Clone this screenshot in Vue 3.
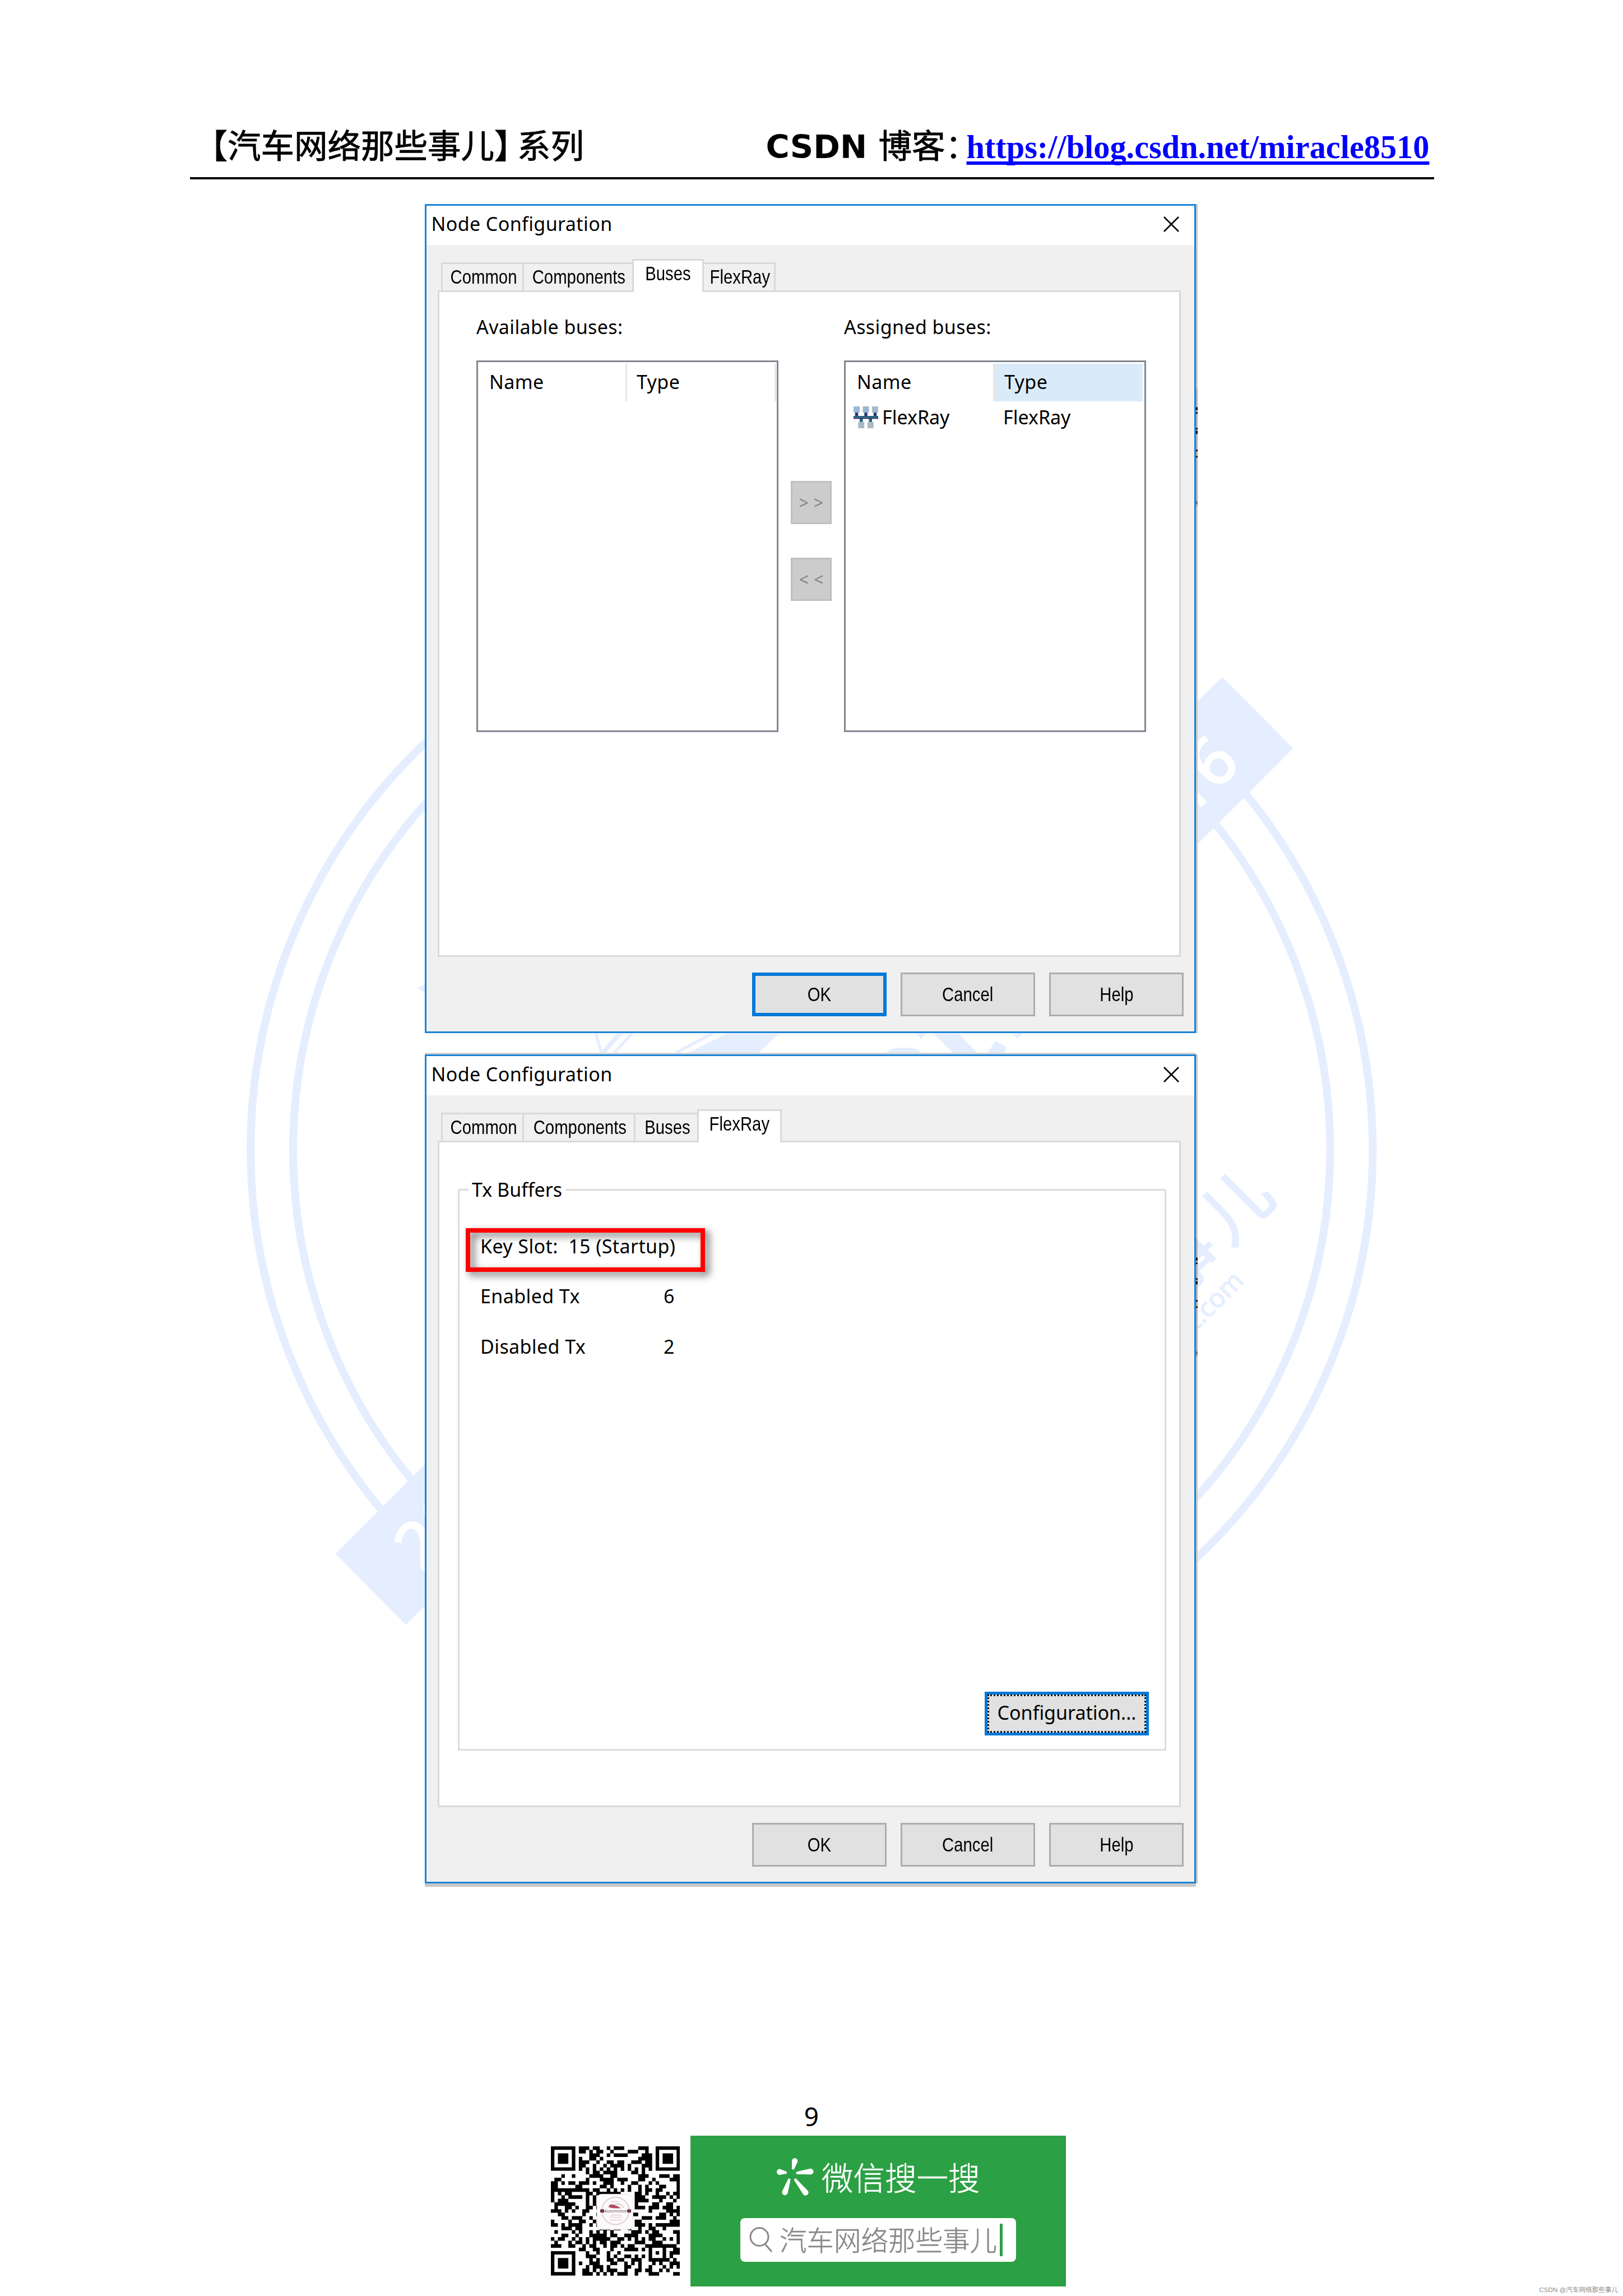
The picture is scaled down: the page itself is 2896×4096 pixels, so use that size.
<template>
  <div class="page">
    <svg class="watermark" viewBox="0 0 4961 7016">
      <g class="rings">
        <circle cx="2481" cy="3513" r="1715" />
        <circle cx="2481" cy="3513" r="1585" />
      </g>
      <g class="tint">
        <polygon points="3736,2068 3953,2287 3500,2740 3283,2521" />
        <polygon points="1025,4748 1241,4966 1694,4513 1478,4295" />
        <polygon points="1276,3020 1330,2990 1330,3050" />
        <polygon points="1885,3158 1905,3158 1852,3217 1833,3217" />
        <polygon points="2222,3158 2382,3158 2318,3217 2104,3217" />
        <polygon points="2800,3158 2830,3158 2815,3175" />
        <polygon points="2853,3158 2930,3158 2987,3217 2913,3217" />
        <polygon points="3096,3158 3126,3158 3111,3174" />
        <polygon points="3043,3181 3076,3200 3069,3217 3018,3217" />
        <path d="M2708 3217Q2724 3202 2742 3202H2785Q2803 3202 2818 3217z" />
        <text class="slogan" text-anchor="end" transform="translate(3922 3647) rotate(-45)">汽车网络那些事儿</text>
        <text class="site" text-anchor="end" transform="translate(3806 3918) rotate(-45)">www.autonet.com</text>
      </g>
      <path class="hair" d="M1821 3158L1838 3217M1933 3158L1877 3217M2178 3158L2066 3217" />
      <text class="year" text-anchor="end" transform="translate(3796 2338) rotate(-45)">2016</text>
      <text class="year" transform="translate(1292 4808) rotate(-45)">20</text>
    </svg>

    <header class="header">
      <div class="series"><span>【汽车网络那些事儿</span><span class="close-bracket">】</span><span>系列</span></div>
      <div class="blog">
        <b>CSDN</b><span class="blog-label">博客</span><span class="colon">：</span>
        <a class="link">https://blog.csdn.net/miracle8510</a>
      </div>
    </header>

    <main class="dialogs">
      <section v-for="d in dialogs" :key="d.active" class="dialog" :class="{ lower: d.active === 'FlexRay' }">
        <div class="titlebar">
          <span class="title">Node Configuration</span>
          <svg class="close" viewBox="0 0 28 28"><path d="M1 1L27 27M27 1L1 27" /></svg>
        </div>

        <div class="tabs">
          <div
            v-for="t in d.tabs"
            :key="t.name"
            class="tab"
            :class="{ active: t.name === d.active }"
            :style="{ width: t.width + 'px' }"
          >
            <span class="narrow">{{ t.name }}</span>
          </div>
        </div>

        <div v-if="d.active === 'Buses'" class="panel buses">
          <div>
            <div class="label">Available buses:</div>
            <div class="list">
              <div class="list-head">
                <span class="cell name">Name</span><span class="cell type">Type</span>
              </div>
            </div>
          </div>
          <div class="movers">
            <button class="mover">&gt;&gt;</button>
            <button class="mover">&lt;&lt;</button>
          </div>
          <div>
            <div class="label">Assigned buses:</div>
            <div class="list assigned">
              <div class="list-head">
                <span class="cell name">Name</span><span class="cell type hot">Type</span>
              </div>
              <div class="list-row">
                <div class="bus">
                  <svg class="bus-icon" viewBox="0 0 16 15" preserveAspectRatio="none">
                    <path fill="#97bbd8" d="M0 0h4v4.2H0z" />
                    <path fill="#9ab6ce" d="M6 0h4v4.2H6z" />
                    <path fill="#a9b9c8" d="M12 0h4v4.2h-4zM3 10.7h4V15H3z" />
                    <path fill="#b1b9c1" d="M9 10.7h4V15H9z" />
                    <path fill="#1b6577" d="M0 6.5h16v1H0zM4 8.5h2v2.2H4zM10 8.5h2v2.2h-2z" />
                    <path fill="#2a3a75" d="M0 7.5h16v1.1H0zM1 4.2h2v2.3H1zM7 4.2h2v2.3H7zM13 4.2h2v2.3h-2z" />
                  </svg>
                  <span>FlexRay</span>
                </div>
                <span>FlexRay</span>
              </div>
            </div>
          </div>
        </div>

        <div v-else class="panel">
          <fieldset class="group">
            <legend>Tx Buffers</legend>
            <div class="group-body">
              <div class="row marked">{{ keySlot }}</div>
              <div class="row"><span>Enabled Tx</span><span>6</span></div>
              <div class="row"><span>Disabled Tx</span><span>2</span></div>
              <button class="config"><span>Configuration...</span></button>
            </div>
          </fieldset>
        </div>

        <div class="actions">
          <button
            v-for="a in actions"
            :key="a"
            class="btn"
            :class="{ primary: a === 'OK' && d.active === 'Buses' }"
          >
            <span class="narrow">{{ a }}</span>
          </button>
        </div>

        <svg class="edge" viewBox="0 0 5 2534" preserveAspectRatio="none">
          <rect width="5" height="2534" fill="#c8c8c8" />
          <rect y="564" width="5" height="362" fill="#adb3b9" />
          <path fill="#0b0b18" d="M0 621h5v9H0zM0 636h5v5H0zM0 684h5v5H0zM0 693h5v10H0zM0 751h5v5H0zM0 770h5v5H0z" />
          <rect y="761" width="5" height="7" fill="#c0a878" />
          <rect y="908" width="5" height="10" fill="#777" />
        </svg>
      </section>
    </main>

    <footer class="footer">
      <div class="page-no">9</div>
      <div class="banner">
        <svg class="qr" viewBox="0 0 37 37">
          <path :d="qrPath" />
          <g v-for="f in finders" :key="f.join()" :transform="`translate(${f[0]} ${f[1]})`">
            <path fill-rule="evenodd" d="M0 0h7v7H0zM1 1v5h5V1zM2 2h3v3H2z" />
          </g>
          <rect x="13.2" y="13.7" width="10.3" height="10.1" rx="1.3" fill="#fdfafb" stroke="#e6e2e4" stroke-width=".15" />
          <circle cx="18.5" cy="18.5" r="3.9" fill="none" stroke="#ddd3d7" stroke-width=".35" />
          <rect x="14.1" y="18" width="1.2" height="1" rx=".3" fill="#6e3a48" />
          <rect x="21.8" y="18" width="1.2" height="1" rx=".3" fill="#6e3a48" />
          <path d="M16.5 17.4q.3-1 1.4-.7t2.2 1q-2 .2-3.6-.3z" fill="#b0495a" />
          <path d="M18.2 16.7q1.8-.6 2.6.9" fill="none" stroke="#bbb" stroke-width=".2" />
          <path d="M17.3 15.9h2.4M17.3 19.7h2.8M17 20.3h3.2M17 21.1h3.3" class="qr-dots" />
          <text x="18.5" y="18.9" class="qr-text" text-anchor="middle">Automotive</text>
        </svg>
        <div class="wechat">
          <div class="wechat-title">
            <svg class="spark" viewBox="0 0 113 116">
              <path v-for="p in petals" :key="p.join()" :d="petal(...p)" />
            </svg>
            <span>微信搜一搜</span>
          </div>
          <div class="search">
            <svg class="lens" viewBox="0 0 42 46">
              <circle cx="18" cy="17.5" r="16" /><path d="M28 30L40 44" />
            </svg>
            <span class="query">汽车网络那些事儿</span>
            <i class="caret"></i>
          </div>
        </div>
      </div>
    </footer>
    <div class="credit">CSDN @汽车网络那些事儿</div>
  </div>
</template>

<script setup>
const actions = ['OK', 'Cancel', 'Help']
const keySlot = 'Key Slot:  15 (Startup)'

const names = ['Common', 'Components', 'Buses', 'FlexRay']
const makeTabs = (widths) => names.map((name, i) => ({ name, width: widths[i] }))

const dialogs = [
  { active: 'Buses', tabs: makeTabs([145, 196, 128, 128]) },
  { active: 'FlexRay', tabs: makeTabs([145, 199, 113, 151]) },
]

// dark modules per row, "start-end" column runs; the finder squares are drawn apart
const qrRows = [
  '8-10 12-13 16 18-20 25-27',
  '8-9 11 13-14 17 22-24 27',
  '11-13 16 18-21 26-28',
  '8 11-12 14 25-28',
  '8-10 13 16-17 19-20 23-25 27-28',
  '8-9 12 15 17-20 22 26-28',
  '8 10 12 14 16 18 20 22 24 26 28',
  '10 12-13 15-18 23-24 26',
  '3 6 11-14 17-18 25-27 31-33 35-36',
  '1-2 10 14-17 19-21 25-26 29 34-36',
  '0-1 3 5-6 8-10 12 15-17 20 23-24 28 30 36',
  '0-1 7-8 14-15 17 22 25 27 31-32 36',
  '0-10 12-13 16 18 20 22 25 27-28 30-31 36',
  '0 2 4-5 10-11 13-19 24-25 27 30 33 35-36',
  '0 3 5-8 10 12 24-26 29-32 34 36',
  '0 2-4 10 12 24-27 31 35',
  '1-6 10 12 24 29-30 33-34',
  '1 4-5 7 10-11 13 24-26 28-30 32-34 36',
  '0-2 4 6 9-10 28 33-36',
  '2-3 9 13 23-24 31-32 34 36',
  '3-4 6-8 11 26-28 30-32 35',
  '0 5 8-9 12 24-25 34-36',
  '0-1 3 5-8 11 13 24-26 28 30-36',
  '3-5 7-8 14-16 18-19 22 25 28-29 32',
  '1 6 8 11 13 15 17 23-25 27 29-30 35-36',
  '3-4 7 11-15 17-18 21-24 28-31 36',
  '0 2-3 6 8 10 12-16 19-20 22 24 26 28-29 32 34 36',
  '1 5 7-8 10 12 14-15 17-19 24-26 29-31 36',
  '0-2 5-6 9 11-12 15 17-18 20 22-23 27-35',
  '8-9 12-13 17 21-24 26 28 32 35-36',
  '10 13 16 19 28 30 32 34-36',
  '10-12 16 18 21-22 24 26 28 32 34',
  '11 13 16-17 19-20 23-25 28-33 35',
  '8 11-13 17-18 21 23 25 29 31 34-36',
  '10 12-14 16 21-22 25 28 32 34 36',
  '9-10 12 14 16-18 21 24-25 27-28 31 33',
  '9-11 13 15 17 19-21 24 28-30 35-36',
]
const finders = [[0, 0], [30, 0], [0, 30]]

const qrPath = qrRows
  .flatMap((row, y) =>
    row.split(' ').map((run) => {
      const [a, b = a] = run.split('-').map(Number)
      const w = b - a + 1
      return `M${a} ${y}h${w}v1.04h-${w}z`
    })
  )
  .join('')

// x, y, radius of the narrow end, then of the wide end
const petals = [
  [50, 31, 4, 55, 9, 9],
  [27, 44, 4, 9, 42, 9],
  [63, 45, 4, 103, 41, 9],
  [38, 66, 4, 25, 104, 9],
  [57, 66, 4, 88, 105, 9],
]

function petal(x1, y1, r1, x2, y2, r2) {
  const len = Math.hypot(x2 - x1, y2 - y1)
  const nx = -(y2 - y1) / len
  const ny = (x2 - x1) / len
  return (
    `M${x1 + nx * r1} ${y1 + ny * r1}A${r1} ${r1} 0 0 1 ${x1 - nx * r1} ${y1 - ny * r1}` +
    `L${x2 - nx * r2} ${y2 - ny * r2}A${r2} ${r2} 0 0 1 ${x2 + nx * r2} ${y2 + ny * r2}Z`
  )
}
</script>

<style>
body { margin: 0; background: #fff; }
</style>

<style scoped>
.page {
  position: relative; width: 2896px; height: 4096px; overflow: hidden; background: #fff;
  color: #000; font-family: "Noto Sans", "Noto Sans CJK SC", sans-serif;
}
button { box-sizing: border-box; padding: 0; font: inherit; color: inherit; border-radius: 0; }

.watermark { position: absolute; left: 0; top: 0; width: 2896px; height: 4096px; }
.rings { fill: none; stroke: #e5eeff; stroke-width: 24; }
.tint { fill: #e5eeff; }
.hair { fill: none; stroke: #e5eeff; stroke-width: 9; }
.year { fill: #fff; stroke: #fff; stroke-width: 6; font-size: 200px; }
.slogan { font-family: "Noto Sans CJK SC", sans-serif; font-size: 208px; letter-spacing: 24px; stroke: #e5eeff; stroke-width: 5; }
.site { font-size: 80px; stroke: #e5eeff; stroke-width: 2; }

.header {
  position: relative; box-sizing: border-box; height: 320px; width: 2220px; margin-left: 338.5px;
  padding-top: 216px; border-bottom: 4px solid #000;
  display: flex; align-items: baseline; font-size: 59.5px; line-height: 80px; white-space: nowrap;
  font-family: "Noto Sans CJK SC", sans-serif;
}
.series { width: 1028px; padding-left: 8px; box-sizing: border-box; display: flex; -webkit-text-stroke: .9px #000; }
.close-bracket { width: 41px; font-feature-settings: "halt"; }
.blog { display: flex; align-items: baseline; }
.blog b { width: 201px; font-family: "DejaVu Sans", sans-serif; font-size: 57.5px; }
.blog-label { -webkit-text-stroke: .9px #000; }
.colon { width: 38px; font-feature-settings: "halt"; }
.link {
  font-family: "Liberation Serif", serif; font-weight: bold; font-size: 58.3px; color: #00f;
  text-decoration: underline; text-decoration-thickness: 6px; text-underline-offset: 6px;
  text-decoration-skip-ink: none;
}

.dialogs { position: relative; margin: 44px 0 0 758px; display: flex; flex-direction: column; gap: 38px; }
.dialog {
  position: relative; box-sizing: border-box; width: 1376px; height: 1479px;
  border: 3px solid #1883d7; background: #f0f0f0; font-size: 34px; letter-spacing: .4px;
}
.dialog.lower { box-shadow: 0 -3px 0 #d4d4d4, 0 6px 0 #c8c8c8; }
.edge { position: absolute; right: -6px; top: -3px; width: 3px; height: 1479px; }
.titlebar {
  box-sizing: border-box; height: 70px; padding: 0 27px 4px 8.5px; background: #fff;
  display: flex; align-items: center; justify-content: space-between;
}
.title { margin-top: -3px; }
.close { width: 28px; height: 28px; stroke: #000; stroke-width: 2.6; fill: none; }

.narrow {
  display: inline-block; transform: scaleX(.85); font-family: "Liberation Sans", sans-serif;
  font-size: 34.5px; letter-spacing: 0; white-space: nowrap;
}
.tabs { position: relative; z-index: 1; height: 59px; margin: 25px 0 -3px 26px; display: flex; align-items: flex-end; }
.tab {
  box-sizing: border-box; height: 50px; margin-bottom: 3px; padding-left: 3px; line-height: 47px;
  border: 3px solid #d9d9d9; border-width: 3px 0 0 3px;
  display: flex; justify-content: center;
}
.tab:last-child { border-right-width: 3px; }
.tab.active { height: 59px; margin-bottom: 0; padding-left: 0; background: #fff; border-right-width: 3px; }
.tab.active + .tab { border-left-width: 0; }

.panel {
  box-sizing: border-box; width: 1326px; height: 1189px; margin-left: 20px;
  border: 3px solid #d9d9d9; background: #fff;
}
.buses { display: flex; padding: 42px 0 0 66px; }
.label { line-height: 40px; margin-bottom: 40px; }
.list { box-sizing: border-box; width: 539px; height: 663px; padding-top: 3px; border: 3px solid #828790; }
.list-head { display: flex; height: 67px; line-height: 64px; }
.cell { box-sizing: border-box; border-right: 3px solid #e5e5e5; }
.cell.name { width: 266px; padding-left: 20px; }
.cell.type { width: 266px; padding-left: 17px; }
.assigned .cell.name { width: 263px; border-right: 0; }
.cell.hot { width: 267px; border-right: 0; border-left: 3px solid #e5e5e5; background: #d9ebf9; }
.list-row { display: grid; grid-template-columns: 281px auto; height: 56px; line-height: 56px; letter-spacing: 0; }
.bus { display: flex; align-items: center; padding-left: 14px; gap: 7px; }
.bus-icon { width: 44px; height: 39px; }
.movers { width: 117px; padding: 295px 0 0 22px; box-sizing: border-box; display: flex; flex-direction: column; gap: 60px; }
.mover {
  width: 73px; height: 77px; background: #ccc; border: 3px solid #bfbfbf; color: #838383;
  font-size: 30px; letter-spacing: 9px; padding-left: 9px;
}

.group { box-sizing: border-box; width: 1264px; height: 1021px; margin: 64px 0 0 33px; padding: 0 28px 0 16px; border: 3px solid #dcdcdc; }
.group legend { padding: 0 6px; line-height: 40px; letter-spacing: 0; }
.group-body { box-sizing: border-box; height: 978px; padding: 36px 0 24px 21px; display: flex; flex-direction: column; }
.row { display: grid; grid-template-columns: 327px auto; height: 89.4px; line-height: 91px; white-space: pre; }
.marked { position: relative; display: block; }
.marked::after {
  content: ""; position: absolute; left: -26px; top: 13px; width: 427px; height: 78px; box-sizing: border-box;
  border: 8px solid #f00; filter: drop-shadow(7px 6px 7px rgba(0, 0, 0, .6));
}
.config {
  width: 293px; height: 78px; margin-top: auto; align-self: flex-end; background: #e1e1e1;
  border: 5px solid #0078d7; letter-spacing: 0;
}
.config span { display: block; box-sizing: border-box; height: 68px; line-height: 59px; border: 3px dotted #111; }

.actions { display: flex; justify-content: flex-end; gap: 25px; margin-top: 28px; padding-right: 19px; }
.btn { width: 240px; height: 78px; padding-bottom: 3px; background: #e1e1e1; border: 3px solid #adadad; }
.btn.primary { border: 6px solid #0078d7; }

.footer { position: relative; padding-top: 385px; }
.page-no { height: 65px; line-height: 61px; font-size: 46px; text-align: center; }
.banner { display: flex; align-items: center; gap: 19px; margin-left: 982.5px; }
.qr { width: 230.5px; height: 230.5px; }
.qr-dots { stroke: #d8aab4; stroke-width: .25; stroke-dasharray: .35 .25; fill: none; }
.qr-text { font-size: 1.15px; fill: #6b5a60; }
.wechat { width: 670px; height: 269px; background: #2ca044; }
.wechat-title {
  display: flex; align-items: center; height: 68px; margin: 40px 0 0 154px; color: #fff;
  font-family: "Noto Sans CJK SC", sans-serif; font-weight: 300; font-size: 56.5px; line-height: 64px;
}
.wechat-title span { margin-top: -4px; -webkit-text-stroke: .6px #fff; }
.spark { width: 66px; height: 68px; margin-right: 14px; fill: #fff; }
.search {
  box-sizing: border-box; width: 492px; height: 78px; margin: 39px 0 0 89px; padding-left: 16px;
  display: flex; align-items: center; border-radius: 8px; background: #fff; color: #888;
  font-family: "Noto Sans CJK SC", sans-serif; font-weight: 300; font-size: 48.5px; line-height: 70px;
}
.lens { width: 42px; height: 46px; margin-right: 12px; fill: none; stroke: #888; stroke-width: 3; }
.query { width: 393px; margin-top: -4px; white-space: nowrap; -webkit-text-stroke: .5px #888; }
.caret { width: 5px; height: 58px; background: #2ca044; }
.credit {
  position: absolute; right: 9px; bottom: 3px; color: #8c8c8c; font-size: 11.6px; line-height: 16px;
  font-family: "Liberation Sans", "Noto Sans CJK SC", sans-serif;
}
</style>
